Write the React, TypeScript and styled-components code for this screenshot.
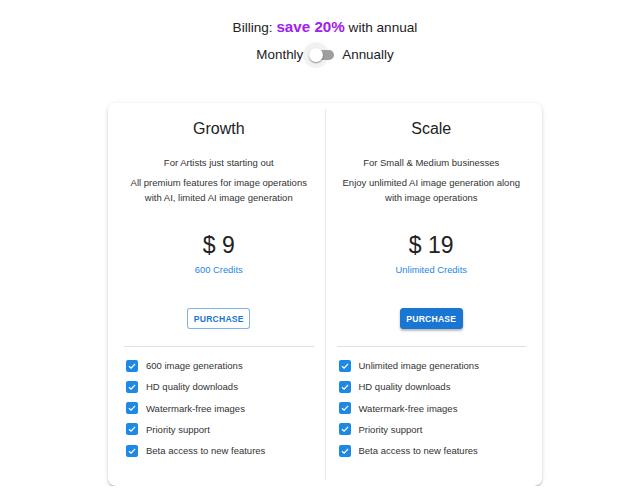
import React from "react";
import styled, { createGlobalStyle } from "styled-components";

const GlobalStyle = createGlobalStyle`
  body {
    margin: 0;
    background: #ffffff;
    font-family: "Liberation Sans", Arial, Helvetica, sans-serif;
    color: #222;
  }
`;

const Page = styled.div`
  display: flex;
  flex-direction: column;
  align-items: center;
  padding: 18px 0 0 9px;
`;

const BillingLine = styled.div`
  font-size: 13.6px;
  line-height: 18px;
  color: #222;
`;

const Save = styled.span`
  color: #a020f0;
  font-weight: 700;
  font-size: 15.2px;
`;

const ToggleRow = styled.div`
  display: flex;
  align-items: center;
  margin-top: 2px;
  height: 30px;
  font-size: 13.4px;
  color: #222;
`;

const SwitchBox = styled.span`
  position: relative;
  display: inline-block;
  width: 38px;
  height: 30px;
  margin: 0 1px 0 0;
`;

const Track = styled.span`
  position: absolute;
  left: 7px;
  top: 11px;
  width: 24px;
  height: 10px;
  border-radius: 5px;
  background: #9e9e9e;
`;

const Halo = styled.span`
  position: absolute;
  left: 0;
  top: 3px;
  width: 26px;
  height: 26px;
  border-radius: 50%;
  background: rgba(0, 0, 0, 0.05);
`;

const Thumb = styled.span`
  position: absolute;
  left: 6px;
  top: 9px;
  width: 14px;
  height: 14px;
  border-radius: 50%;
  background: #fff;
  box-shadow: 0 1px 2px rgba(0, 0, 0, 0.3), 0 1px 1px rgba(0, 0, 0, 0.14);
`;

const Card = styled.div`
  margin-top: 34px;
  width: 434px;
  box-sizing: border-box;
  background: #fff;
  border-radius: 8px;
  box-shadow: 0px 3px 1px -2px rgba(0, 0, 0, 0.2), 0px 2px 2px 0px rgba(0, 0, 0, 0.14),
    0px 1px 5px 0px rgba(0, 0, 0, 0.12);
  padding: 0 16px;
  display: grid;
  grid-template-columns: 1fr 1px 1fr;
  column-gap: 11px;
`;

const Divider = styled.div`
  background: #e6e6e6;
  margin: 6px 0 6px;
`;

const Plan = styled.div`
  display: flex;
  flex-direction: column;
  align-items: center;
  text-align: center;
  padding: 16px 0 25px;
`;

const Title = styled.div`
  font-size: 16px;
  line-height: 20px;
  color: #222;
`;

const Subtitle = styled.div`
  margin-top: 15.5px;
  font-size: 9.5px;
  line-height: 15px;
  color: #333;
`;

const Desc = styled.div`
  margin-top: 5px;
  font-size: 9.5px;
  line-height: 15px;
  color: #333;
`;

const Price = styled.div`
  margin-top: 26.5px;
  font-size: 23px;
  line-height: 28px;
  color: #222;
`;

const Credits = styled.div`
  margin-top: 4px;
  font-size: 9.4px;
  line-height: 14px;
  color: #1e88e5;
`;

const Button = styled.button<{ $filled?: boolean }>`
  margin-top: 31px;
  width: 63px;
  height: 21px;
  box-sizing: border-box;
  padding: 0;
  font-family: "Liberation Sans", Arial, sans-serif;
  font-size: 8.6px;
  font-weight: 700;
  letter-spacing: 0.2px;
  text-transform: uppercase;
  border-radius: 3px;
  cursor: pointer;
  color: ${(p) => (p.$filled ? "#fff" : "#1976d2")};
  background: ${(p) => (p.$filled ? "#1976d2" : "#fff")};
  border: 1px solid ${(p) => (p.$filled ? "#1976d2" : "rgba(25, 118, 210, 0.55)")};
  box-shadow: ${(p) =>
    p.$filled ? "0px 2px 2px rgba(0,0,0,0.2), 0px 1px 3px rgba(0,0,0,0.12)" : "none"};
`;

const Rule = styled.div`
  align-self: stretch;
  margin-top: 17px;
  height: 1px;
  background: #e0e0e0;
`;

const Features = styled.ul`
  align-self: stretch;
  list-style: none;
  margin: 8px 0 0;
  padding: 0;
`;

const Feature = styled.li`
  display: flex;
  align-items: center;
  height: 21.25px;
  padding-left: 2px;
  font-size: 9.5px;
  color: #333;
  text-align: left;
`;

const Box = styled.span`
  display: inline-flex;
  align-items: center;
  justify-content: center;
  width: 12px;
  height: 12px;
  border-radius: 2px;
  background: #1e88e5;
  margin-right: 8px;
  flex-shrink: 0;
`;

const CheckBox = () => (
  <Box>
    <svg width="10" height="10" viewBox="0 0 10 10">
      <path d="M2 5.2 L4.1 7.2 L8.1 2.9" fill="none" stroke="#fff" strokeWidth="1.3" />
    </svg>
  </Box>
);

type PlanData = {
  title: string;
  subtitle: string;
  desc: string[];
  price: string;
  credits: string;
  filled: boolean;
  features: string[];
};

const plans: PlanData[] = [
  {
    title: "Growth",
    subtitle: "For Artists just starting out",
    desc: ["All premium features for image operations", "with AI, limited AI image generation"],
    price: "$ 9",
    credits: "600 Credits",
    filled: false,
    features: [
      "600 image generations",
      "HD quality downloads",
      "Watermark-free images",
      "Priority support",
      "Beta access to new features",
    ],
  },
  {
    title: "Scale",
    subtitle: "For Small & Medium businesses",
    desc: ["Enjoy unlimited AI image generation along", "with image operations"],
    price: "$ 19",
    credits: "Unlimited Credits",
    filled: true,
    features: [
      "Unlimited image generations",
      "HD quality downloads",
      "Watermark-free images",
      "Priority support",
      "Beta access to new features",
    ],
  },
];

const PlanColumn = ({ plan }: { plan: PlanData }) => (
  <Plan>
    <Title>{plan.title}</Title>
    <Subtitle>{plan.subtitle}</Subtitle>
    <Desc>
      {plan.desc.map((line) => (
        <div key={line}>{line}</div>
      ))}
    </Desc>
    <Price>{plan.price}</Price>
    <Credits>{plan.credits}</Credits>
    <Button $filled={plan.filled}>Purchase</Button>
    <Rule />
    <Features>
      {plan.features.map((f) => (
        <Feature key={f}>
          <CheckBox />
          {f}
        </Feature>
      ))}
    </Features>
  </Plan>
);

const App = () => {
  return (
    <>
      <GlobalStyle />
      <Page>
        <BillingLine>
          Billing: <Save>save 20%</Save> with annual
        </BillingLine>
        <ToggleRow>
          Monthly
          <SwitchBox>
            <Halo />
            <Track />
            <Thumb />
          </SwitchBox>
          Annually
        </ToggleRow>
        <Card>
          <PlanColumn plan={plans[0]} />
          <Divider />
          <PlanColumn plan={plans[1]} />
        </Card>
      </Page>
    </>
  );
};

export default App;
